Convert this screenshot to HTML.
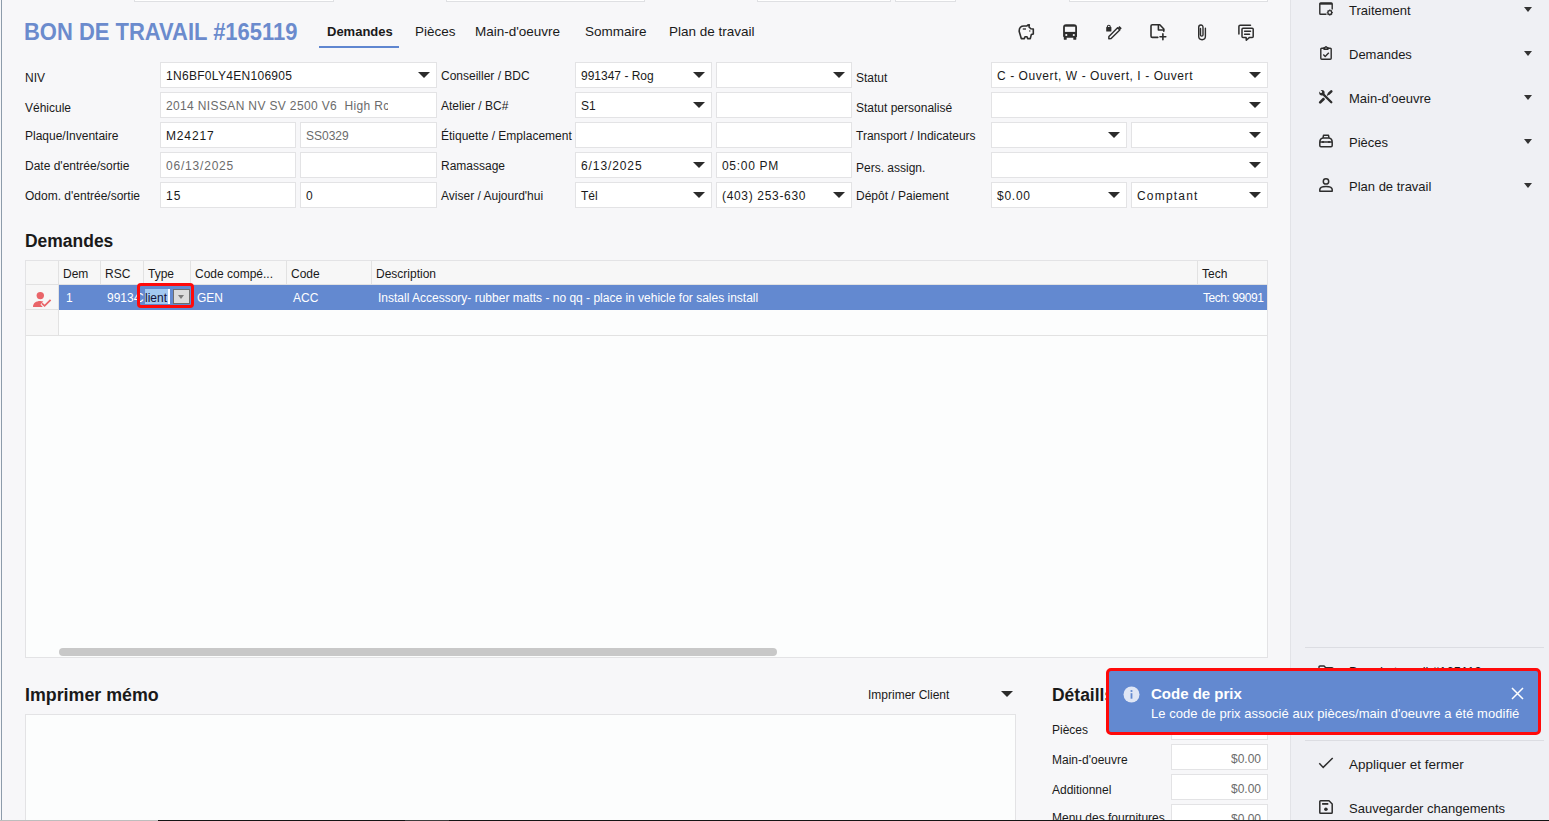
<!DOCTYPE html>
<html><head><meta charset="utf-8">
<style>
*{margin:0;padding:0;box-sizing:border-box}
html,body{width:1549px;height:821px;overflow:hidden}
body{position:relative;background:#f7f7f9;font-family:"Liberation Sans",sans-serif;font-size:12px;color:#1a1a1a}
.a{position:absolute;white-space:nowrap}
.lb{position:absolute;white-space:nowrap;font-size:12px;line-height:16px;color:#1a1a1a}
.in{position:absolute;background:#fff;border:1px solid #e3e3e5;height:26px;font-size:12px;line-height:16px;padding:5px 0 0 5px;white-space:nowrap;overflow:hidden;color:#1a1a1a}
.dd::after{content:"";position:absolute;right:6px;top:9px;border-left:6px solid transparent;border-right:6px solid transparent;border-top:6px solid #2b2b2b}
.g{color:#6b6b6b}
.tab{position:absolute;top:24px;font-size:13.5px;line-height:16px;color:#1a1a1a;white-space:nowrap}
.sb{position:absolute;left:1290px;top:0;width:259px;height:821px;background:#eff0f4;border-left:1px solid #e2e3e7}
.si{position:absolute;left:58px;font-size:13px;line-height:16px;color:#1a1a1a;white-space:nowrap}
.sarr{position:absolute;left:233px;border-left:4px solid transparent;border-right:4px solid transparent;border-top:5px solid #333}
.hd{position:absolute;top:261px;height:23px;font-size:12px;line-height:16px;padding-top:5px;color:#1a1a1a;white-space:nowrap}
.rw{position:absolute;top:285px;font-size:12px;line-height:16px;color:#fff;white-space:nowrap}
</style></head><body>
<!-- left edge -->
<div class="a" style="left:1px;top:0;width:1px;height:821px;background:#8d9cab"></div>
<!-- top partial boxes -->
<div class="a" style="left:134px;top:-10px;width:200px;height:12px;border:1px solid #dfe0e3;background:#fff"></div>
<div class="a" style="left:446px;top:-10px;width:199px;height:12px;border:1px solid #dfe0e3;background:#fff"></div>
<div class="a" style="left:757px;top:-10px;width:134px;height:12px;border:1px solid #dfe0e3;background:#fff"></div>
<div class="a" style="left:895px;top:-10px;width:61px;height:12px;border:1px solid #dfe0e3;background:#fff"></div>
<div class="a" style="left:1069px;top:-10px;width:199px;height:12px;border:1px solid #dfe0e3;background:#fff"></div>

<!-- title -->
<div class="a" style="left:24px;top:19px;font-size:23px;line-height:26px;font-weight:bold;transform:scaleX(0.955);transform-origin:0 0;color:#6b8bcd">BON DE TRAVAIL #165119</div>
<div class="tab" style="left:327px;font-weight:bold;font-size:13px">Demandes</div>
<div class="a" style="left:319px;top:46px;width:80px;height:2px;background:#5f86d0"></div>
<div class="tab" style="left:415px">Pièces</div>
<div class="tab" style="left:475px">Main-d'oeuvre</div>
<div class="tab" style="left:585px">Sommaire</div>
<div class="tab" style="left:669px">Plan de travail</div>

<!-- form -->
<div class="lb" style="left:25px;top:70px">NIV</div>
<div class="lb" style="left:25px;top:100px">Véhicule</div>
<div class="lb" style="left:25px;top:128px">Plaque/Inventaire</div>
<div class="lb" style="left:25px;top:158px">Date d'entrée/sortie</div>
<div class="lb" style="left:25px;top:188px">Odom. d'entrée/sortie</div>

<div class="in dd" style="left:160px;top:62px;width:277px;letter-spacing:0.3px">1N6BF0LY4EN106905</div>
<div class="in g" style="left:160px;top:92px;width:277px;letter-spacing:0.36px"><div style="width:222px;overflow:hidden">2014 NISSAN NV SV 2500 V6&nbsp; High Rc</div></div>
<div class="in" style="left:160px;top:122px;width:136px;letter-spacing:0.85px">M24217</div>
<div class="in g" style="left:300px;top:122px;width:137px">SS0329</div>
<div class="in g" style="left:160px;top:152px;width:136px;letter-spacing:0.8px">06/13/2025</div>
<div class="in" style="left:300px;top:152px;width:137px"></div>
<div class="in" style="left:160px;top:182px;width:136px;letter-spacing:1px">15</div>
<div class="in" style="left:300px;top:182px;width:137px">0</div>

<div class="lb" style="left:441px;top:68px">Conseiller / BDC</div>
<div class="lb" style="left:441px;top:98px">Atelier / BC#</div>
<div class="lb" style="left:441px;top:128px">Étiquette / Emplacement</div>
<div class="lb" style="left:441px;top:158px">Ramassage</div>
<div class="lb" style="left:441px;top:188px">Aviser / Aujourd'hui</div>

<div class="in dd" style="left:575px;top:62px;width:137px">991347 - Rog</div>
<div class="in dd" style="left:716px;top:62px;width:136px"></div>
<div class="in dd" style="left:575px;top:92px;width:137px">S1</div>
<div class="in" style="left:716px;top:92px;width:136px"></div>
<div class="in" style="left:575px;top:122px;width:137px"></div>
<div class="in" style="left:716px;top:122px;width:136px"></div>
<div class="in dd" style="left:575px;top:152px;width:137px;letter-spacing:0.9px">6/13/2025</div>
<div class="in" style="left:716px;top:152px;width:136px;letter-spacing:0.7px">05:00 PM</div>
<div class="in dd" style="left:575px;top:182px;width:137px">Tél</div>
<div class="in dd" style="left:716px;top:182px;width:136px;letter-spacing:0.67px">(403) 253-630</div>

<div class="lb" style="left:856px;top:70px">Statut</div>
<div class="lb" style="left:856px;top:100px">Statut personalisé</div>
<div class="lb" style="left:856px;top:128px">Transport / Indicateurs</div>
<div class="lb" style="left:856px;top:160px">Pers. assign.</div>
<div class="lb" style="left:856px;top:188px">Dépôt / Paiement</div>

<div class="in dd" style="left:991px;top:62px;width:277px;letter-spacing:0.57px">C - Ouvert, W - Ouvert, I - Ouvert</div>
<div class="in dd" style="left:991px;top:92px;width:277px"></div>
<div class="in dd" style="left:991px;top:122px;width:136px"></div>
<div class="in dd" style="left:1131px;top:122px;width:137px"></div>
<div class="in dd" style="left:991px;top:152px;width:277px"></div>
<div class="in dd" style="left:991px;top:182px;width:136px;letter-spacing:0.75px">$0.00</div>
<div class="in dd" style="left:1131px;top:182px;width:137px;letter-spacing:1.2px">Comptant</div>

<!-- Demandes grid -->
<div class="a" style="left:25px;top:230px;font-size:18px;line-height:22px;font-weight:bold;transform:scaleX(0.97);transform-origin:0 0">Demandes</div>
<div class="a" style="left:25px;top:260px;width:1243px;height:398px;background:#fcfdfd;border:1px solid #e3e3e5"></div>

<div class="a" style="left:26px;top:261px;width:1241px;height:24px;background:#f7f7f7;border-bottom:1px solid #e2e2e2"></div>
<div class="a" style="left:26px;top:285px;width:33px;height:51px;background:#f7f7f7;border-right:1px solid #e2e2e2"></div>
<div class="a" style="left:26px;top:335px;width:1241px;height:1px;background:#e2e2e2"></div>
<div class="a" style="left:26px;top:309px;width:33px;height:1px;background:#e2e2e2"></div>
<div class="a" style="left:58px;top:261px;width:1px;height:24px;background:#e2e2e2"></div>
<div class="a" style="left:100px;top:261px;width:1px;height:24px;background:#e2e2e2"></div>
<div class="a" style="left:143px;top:261px;width:1px;height:24px;background:#e2e2e2"></div>
<div class="a" style="left:190px;top:261px;width:1px;height:24px;background:#e2e2e2"></div>
<div class="a" style="left:286px;top:261px;width:1px;height:24px;background:#e2e2e2"></div>
<div class="a" style="left:371px;top:261px;width:1px;height:24px;background:#e2e2e2"></div>
<div class="a" style="left:1197px;top:261px;width:1px;height:24px;background:#e2e2e2"></div>
<div class="hd" style="left:63px">Dem</div>
<div class="hd" style="left:105px">RSC</div>
<div class="hd" style="left:148px">Type</div>
<div class="hd" style="left:195px">Code compé...</div>
<div class="hd" style="left:291px">Code</div>
<div class="hd" style="left:376px">Description</div>
<div class="hd" style="left:1202px">Tech</div>
<div class="a" style="left:59px;top:285px;width:1208px;height:25px;background:#6389d0"></div>
<div class="rw" style="left:66px;top:290px">1</div>
<div class="rw" style="left:107px;top:290px">99134</div>
<div class="rw" style="left:197px;top:290px">GEN</div>
<div class="rw" style="left:293px;top:290px">ACC</div>
<div class="rw" style="left:378px;top:290px">Install Accessory- rubber matts - no qq - place in vehicle for sales install</div>
<div class="rw" style="left:1203px;top:290px;letter-spacing:-0.45px">Tech: 99091</div>
<!-- type editor -->
<div class="a" style="left:139px;top:286px;width:53px;height:22px;background:#6389d0"></div>
<div class="a" style="left:145px;top:289px;width:25px;height:15px;background:#a3c9f1"></div>
<div class="a" style="left:168px;top:289px;width:2px;height:15px;background:#fff"></div>
<div class="a" style="left:145px;top:290px;font-size:12px;line-height:16px;color:#14143a">lient</div>
<div class="a" style="left:140px;top:290px;width:4px;height:16px;overflow:hidden"><div class="a" style="left:-5px;top:0;font-size:12px;line-height:16px;color:#fff">C</div></div>
<div class="a" style="left:173px;top:289px;width:17px;height:15px;background:#dcdcdc;border:1px solid #6e6e6e"></div>
<div class="a" style="left:178px;top:295px;border-left:3.5px solid transparent;border-right:3.5px solid transparent;border-top:4px solid #7a7a7a"></div>
<div class="a" style="left:137px;top:283px;width:57px;height:25px;border:3px solid #ff0a0a;border-radius:4px"></div>
<!-- person icon -->
<svg class="a" style="left:32px;top:291px" width="20" height="17" viewBox="0 0 20 17">
<circle cx="8.3" cy="4.6" r="3.7" fill="#e96569"/>
<path d="M1 16 C1 12 4 10 8.3 10 C9.5 10 10.5 10.2 11.3 10.5 L8.5 13.5 L10.8 16 Z" fill="#e96569"/>
<path d="M10 12.3 L12.6 14.8 L18.6 8.8" stroke="#e96569" stroke-width="1.8" fill="none"/>
</svg>
<!-- scrollbar -->
<div class="a" style="left:59px;top:648px;width:718px;height:8px;background:#c8c8c8;border-radius:4px"></div>

<!-- Imprimer memo -->
<div class="a" style="left:25px;top:684px;font-size:18px;line-height:22px;font-weight:bold;transform:scaleX(0.99);transform-origin:0 0">Imprimer mémo</div>
<div class="a" style="left:868px;top:687px;font-size:12px;line-height:16px">Imprimer Client</div>
<div class="a" style="left:1001px;top:691px;border-left:6px solid transparent;border-right:6px solid transparent;border-top:6px solid #2b2b2b"></div>
<div class="a" style="left:25px;top:714px;width:991px;height:120px;background:#fcfdfd;border:1px solid #e3e3e5"></div>
<!-- Details -->
<div class="a" style="left:1052px;top:684px;font-size:18px;line-height:22px;font-weight:bold;transform:scaleX(0.97);transform-origin:0 0">Détaills</div>
<div class="lb" style="left:1052px;top:722px">Pièces</div>
<div class="lb" style="left:1052px;top:752px">Main-d'oeuvre</div>
<div class="lb" style="left:1052px;top:782px">Additionnel</div>
<div class="lb" style="left:1052px;top:810px">Menu des fournitures</div>
<div class="in" style="left:1171px;top:714px;width:97px;text-align:right;padding:4px 6px 0 0"></div>
<div class="in g" style="left:1171px;top:744px;width:97px;text-align:right;padding:6px 6px 0 0">$0.00</div>
<div class="in g" style="left:1171px;top:774px;width:97px;text-align:right;padding:6px 6px 0 0">$0.00</div>
<div class="in g" style="left:1171px;top:804px;width:97px;text-align:right;padding:6px 6px 0 0">$0.00</div>
<!-- sidebar -->
<div class="sb">
<div class="si" style="top:3px">Traitement</div>
<div class="si" style="top:47px">Demandes</div>
<div class="si" style="top:91px">Main-d'oeuvre</div>
<div class="si" style="top:135px">Pièces</div>
<div class="si" style="top:179px">Plan de travail</div>
<div class="sarr" style="top:7px"></div>
<div class="sarr" style="top:51px"></div>
<div class="sarr" style="top:95px"></div>
<div class="sarr" style="top:139px"></div>
<div class="sarr" style="top:183px"></div>
<div class="a" style="left:14px;top:647px;width:239px;height:1px;background:#dcdde2"></div>
<div class="si" style="top:664px">Bon de travail #165119</div>
<div class="a" style="left:14px;top:740px;width:239px;height:1px;background:#dcdde2"></div>
<div class="si" style="top:757px;font-size:13.5px">Appliquer et fermer</div>
<div class="si" style="top:801px">Sauvegarder changements</div>
</div>

<!-- header icons -->
<svg class="a" style="left:1018px;top:24px" width="17" height="16" viewBox="0 0 17 16" fill="none" stroke="#2d2d2d" stroke-width="1.6" stroke-linejoin="round">
<path d="M1.2 7.5 C1 3.5 3 2 6 2 L8.8 2 C9.5 1.2 10.5 0.8 11.3 0.9 L11 3 L12.8 4.8 L15.3 5 L15.3 10 L13.3 10.6 L12.3 14.6 L9.6 14.6 L9 12.8 L7 12.8 L6.4 14.6 L3.3 14.6 Z"/>
<path d="M4.8 5 L8 5" stroke-width="1.3"/>
<circle cx="11.8" cy="7" r="0.7" fill="#2d2d2d" stroke="none"/>
</svg>
<svg class="a" style="left:1063px;top:24px" width="15" height="17" viewBox="0 0 15 17">
<path d="M3 0.3 L11 0.3 Q14 0.3 14 3.3 L14 12.5 Q14 13.3 13.3 13.3 L13.3 15.3 Q13.3 15.8 12.6 15.8 L10.8 15.8 Q10.3 15.8 10.3 15.2 L10.3 13.8 L3.7 13.8 L3.7 15.2 Q3.7 15.8 3.2 15.8 L1.4 15.8 Q0.8 15.8 0.8 15.2 L0.8 13.3 Q0.1 13 0.1 12.3 L0.1 3.3 Q0.1 0.3 3 0.3 Z" fill="#2d2d2d"/>
<rect x="1.9" y="2.7" width="10.3" height="5.2" fill="#f7f7f9"/>
<circle cx="3.3" cy="11" r="1.1" fill="#f7f7f9"/><circle cx="10.8" cy="11" r="1.1" fill="#f7f7f9"/>
</svg>
<svg class="a" style="left:1105px;top:24px" width="18" height="16" viewBox="0 0 18 16">
<path d="M2.4 3.2 L2.4 2.6 Q2.4 1.3 3.8 1.3 Q5.2 1.3 5.2 2.6 L5.2 3.2" fill="none" stroke="#2d2d2d" stroke-width="1.1"/>
<rect x="1.2" y="3" width="5.2" height="4.6" rx="0.6" fill="#2d2d2d"/>
<path d="M3.8 14.8 L3.9 12.4 L12.6 3.7 L14.8 5.9 L6.1 14.6 Z" fill="none" stroke="#2d2d2d" stroke-width="1.4" stroke-linejoin="round"/>
<path d="M16.74 4.22 L14.48 1.96 L13.06 3.38 L15.32 5.64 Z" fill="#2d2d2d"/>
</svg>
<svg class="a" style="left:1150px;top:24px" width="17" height="17" viewBox="0 0 17 17" fill="none" stroke="#2d2d2d" stroke-width="1.6" stroke-linecap="round" stroke-linejoin="round">
<path d="M7.8 13.4 L2.3 13.4 Q1 13.4 1 12 L1 2.1 Q1 0.8 2.3 0.8 L9.8 0.8 L13.8 5 L13.8 7.3"/>
<path d="M8.4 0.9 L8.4 6 L13.6 6"/>
<path d="M10 12.8 L15.8 12.8 M12.9 9.9 L12.9 15.7"/>
</svg>
<svg class="a" style="left:1198px;top:23.5px" width="9" height="17" viewBox="0 0 9 17" fill="none" stroke="#2d2d2d" stroke-width="1.4" stroke-linecap="round">
<path d="M2.5 4.5 L2.5 11 Q2.5 12.1 3.75 12.1 Q5 12.1 5 11 L5 3.5 Q5 1 2.85 1 Q0.7 1 0.7 3.5 L0.7 12.3 Q0.7 15.7 4.05 15.7 Q7.4 15.7 7.4 12.3 L7.4 4.3"/>
</svg>
<svg class="a" style="left:1238px;top:23.5px" width="17" height="18" viewBox="0 0 17 18" fill="none" stroke="#2d2d2d" stroke-width="1.5" stroke-linecap="round" stroke-linejoin="round">
<path d="M0.9 10 L0.9 2.6 Q0.9 1.3 2.2 1.3 L12.5 1.3"/>
<path d="M5 4.3 L14.2 4.3 Q15.2 4.3 15.2 5.3 L15.2 12.4 Q15.2 13.4 14.2 13.4 L11.5 13.4 L8.3 16.3 L8.1 13.4 L5 13.4 Q4 13.4 4 12.4 L4 5.3 Q4 4.3 5 4.3 Z"/>
<path d="M6.6 7.3 L12.5 7.3 M6.6 10.2 L11.5 10.2"/>
</svg>
<!-- sidebar icons -->
<svg class="a" style="left:1319px;top:2px" width="15" height="14" viewBox="0 0 15 14" fill="none" stroke="#2d2d2d" stroke-width="1.4">
<path d="M7.5 12.3 L1.6 12.3 Q0.8 12.3 0.8 11.5 L0.8 2 Q0.8 1 1.8 1 L12.2 1 Q13.2 1 13.2 2 L13.2 7.5"/>
<rect x="0.8" y="0.9" width="12.4" height="1.8" fill="#2d2d2d" stroke="none"/>
<circle cx="10.8" cy="10.6" r="1.9" stroke-width="1.3"/>
<path d="M10.8 7.6 L10.8 8.4 M10.8 12.8 L10.8 13.6 M7.8 10.6 L8.6 10.6 M13 10.6 L13.8 10.6 M8.7 8.5 L9.2 9 M12.4 12.2 L12.9 12.7 M8.7 12.7 L9.2 12.2 M12.4 9 L12.9 8.5" stroke-width="1.3"/>
</svg>
<svg class="a" style="left:1320px;top:46px" width="13" height="14" viewBox="0 0 13 14" fill="none" stroke="#2d2d2d" stroke-width="1.4" stroke-linejoin="round">
<path d="M4 2.3 L1.8 2.3 Q0.8 2.3 0.8 3.3 L0.8 12.2 Q0.8 13.2 1.8 13.2 L10.2 13.2 Q11.2 13.2 11.2 12.2 L11.2 3.3 Q11.2 2.3 10.2 2.3 L8 2.3"/>
<path d="M4 3.3 L4 1.7 L5 1.7 Q5.2 0.7 6 0.7 Q6.8 0.7 7 1.7 L8 1.7 L8 3.3 Z"/>
<path d="M3.3 8.6 L5.2 10.4 L8.8 6.8"/>
</svg>
<svg class="a" style="left:1318px;top:89px" width="16" height="16" viewBox="0 0 16 16" stroke="#2d2d2d">
<path d="M2.2 13.4 L5.6 10" stroke-width="2.7" stroke-linecap="round"/>
<path d="M8.6 7 L11.2 4.4" stroke-width="1.3"/>
<path d="M10.9 4.7 L13.3 2.3" stroke-width="2.6" stroke-linecap="round"/>
<path d="M4.6 4.6 L13.3 13.3" stroke-width="3.9" stroke="#eff0f4"/>
<path d="M4.6 4.6 L13.3 13.3" stroke-width="2.3" stroke-linecap="round"/>
<circle cx="3.9" cy="3.8" r="2.7" fill="#2d2d2d" stroke="none"/>
<path d="M3.1 3 L0.6 0.5" stroke="#eff0f4" stroke-width="2"/>
<circle cx="3.1" cy="3" r="1.05" fill="#eff0f4" stroke="none"/>
</svg>
<svg class="a" style="left:1319px;top:134px" width="15" height="14" viewBox="0 0 15 14" fill="none" stroke="#2d2d2d" stroke-width="1.5" stroke-linejoin="round">
<path d="M2 12.7 Q0.8 12.7 0.8 11.5 L0.8 8.3 Q0.8 4.2 4.2 3.9 L9.8 3.9 Q13.2 4.2 13.2 8.3 L13.2 11.5 Q13.2 12.7 12 12.7 Z"/>
<path d="M4 3.9 L4.5 1.3 L9.5 1.3 L10 3.9"/>
<path d="M1 8 L13 8"/>
<circle cx="4" cy="8" r="1.1" fill="#2d2d2d" stroke="none"/><circle cx="10" cy="8" r="1.1" fill="#2d2d2d" stroke="none"/>
</svg>
<svg class="a" style="left:1319px;top:177px" width="14" height="15" viewBox="0 0 14 15" fill="none" stroke="#2d2d2d" stroke-width="1.5" stroke-linejoin="round">
<circle cx="7" cy="4.4" r="2.7"/>
<path d="M0.8 14.2 L0.8 12.6 Q0.8 9.4 7 9.4 Q13.2 9.4 13.2 12.6 L13.2 14.2 Z"/>
</svg>
<svg class="a" style="left:1318px;top:664.5px" width="16" height="14" viewBox="0 0 16 14" fill="none" stroke="#2d2d2d" stroke-width="1.4">
<path d="M1 12 L1 2 Q1 1 2 1 L6 1 L7.5 2.6 L14 2.6 Q15 2.6 15 3.6 L15 12 Z"/>
</svg>
<svg class="a" style="left:1318px;top:757px" width="16" height="12" viewBox="0 0 16 12" fill="none" stroke="#2d2d2d" stroke-width="1.5">
<path d="M1.3 6.3 L5.2 10.4 L14.7 1"/>
</svg>
<svg class="a" style="left:1319px;top:800px" width="14" height="14" viewBox="0 0 14 14" fill="none" stroke="#2d2d2d" stroke-width="1.5" stroke-linejoin="round">
<path d="M1.6 0.8 L10 0.8 L13.2 4 L13.2 12.4 Q13.2 13.2 12.4 13.2 L1.6 13.2 Q0.8 13.2 0.8 12.4 L0.8 1.6 Q0.8 0.8 1.6 0.8 Z"/>
<rect x="3.1" y="3" width="6.2" height="1.8" fill="#2d2d2d" stroke="none"/>
<circle cx="6.9" cy="9.2" r="1.8" fill="#2d2d2d" stroke="none"/>
</svg>
<!-- toast -->
<div class="a" style="left:1106px;top:668px;width:435px;height:67px;background:#6389d0;border:3px solid #ff0a0a;border-radius:5px"></div>
<svg class="a" style="left:1122.5px;top:685.5px" width="17" height="17" viewBox="0 0 17 17"><circle cx="8.5" cy="8.5" r="8" fill="#dfe6f5"/><rect x="7.6" y="7.2" width="1.8" height="5.5" fill="#6389d0"/><circle cx="8.5" cy="5" r="1.1" fill="#6389d0"/></svg>
<div class="a" style="left:1151px;top:684px;font-size:15px;line-height:20px;font-weight:bold;color:#fff">Code de prix</div>
<div class="a" style="left:1151px;top:706px;font-size:13px;line-height:16px;color:#fff;letter-spacing:0.05px">Le code de prix associé aux pièces/main d'oeuvre a été modifié</div>
<svg class="a" style="left:1511px;top:687px" width="13" height="13" viewBox="0 0 13 13"><path d="M1 1L12 12M12 1L1 12" stroke="#fff" stroke-width="1.5"/></svg>
<!-- bottom edge -->
<div class="a" style="left:0;top:820px;width:1549px;height:1px;background:linear-gradient(to right,#bdbdbd 0,#bdbdbd 158px,#141414 158px,#141414 405px,#3c3c3c 405px,#3c3c3c 449px,#141414 449px)"></div>
</body></html>
